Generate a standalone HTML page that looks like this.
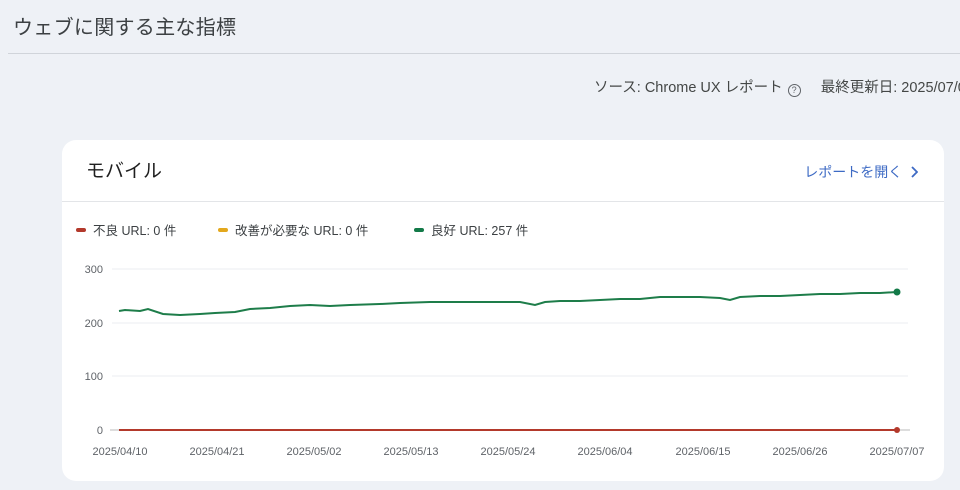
<!DOCTYPE html>
<html><head><meta charset="utf-8">
<style>
*{margin:0;padding:0;box-sizing:border-box}
body{width:960px;height:490px;background:#eef1f6;font-family:"Liberation Sans","Noto Sans CJK JP",sans-serif;position:relative;overflow:hidden;color:#1f1f1f}
.title{position:absolute;left:13px;top:11px;font-size:20px;color:#3c4043;letter-spacing:0.3px}
.hr{position:absolute;left:8px;right:0;top:53px;height:1px;background:#d0d4da}
.src{position:absolute;left:594px;top:76px;font-size:14.5px;color:#444746;white-space:nowrap}
.q{display:inline-block;width:13px;height:13px;border:1.3px solid #5f6368;border-radius:50%;font-size:9px;line-height:11px;text-align:center;vertical-align:-1px;margin-left:5px;color:#5f6368}
.card{position:absolute;left:62px;top:140px;width:882px;height:341px;background:#fff;border-radius:14px}
.ch{position:absolute;left:24px;top:16px;font-size:19px;color:#1f1f1f}
.open{position:absolute;right:26px;top:22px;font-size:14px;color:#3d6ac4}
.sep{position:absolute;left:0;right:0;top:61px;height:1px;background:#e3e5e8}
.leg{position:absolute;top:80px;font-size:12.5px;color:#3c4043;white-space:nowrap}
.leg i{display:inline-block;width:10px;height:4px;border-radius:2px;margin-right:7px;vertical-align:3px}
</style></head><body>
<div class="title">ウェブに関する主な指標</div>
<div class="hr"></div>
<div class="src">ソース: Chrome UX レポート<span class="q">?</span>&nbsp;&nbsp;&nbsp;&nbsp;&nbsp;最終更新日: 2025/07/07</div>
<div class="card">
<div class="ch">モバイル</div>
<div class="open">レポートを開く&nbsp;&nbsp;<svg width="8" height="12" viewBox="0 0 8 12" style="vertical-align:-1px"><path d="M2 1l5 5-5 5" fill="none" stroke="#3d6ac4" stroke-width="1.8"/></svg></div>
<div class="sep"></div>
<div class="leg" style="left:14px"><i style="background:#b3392b"></i>不良 URL: 0 件</div>
<div class="leg" style="left:156px"><i style="background:#e3a81d"></i>改善が必要な URL: 0 件</div>
<div class="leg" style="left:352px"><i style="background:#137a48"></i>良好 URL: 257 件</div>
</div>
<svg width="960" height="490" style="position:absolute;left:0;top:0" font-family="Liberation Sans, sans-serif" font-size="11" fill="#5f6368">
<g stroke="#ebedf0" stroke-width="1">
<line x1="112" y1="269" x2="908" y2="269"/><line x1="112" y1="323" x2="908" y2="323"/><line x1="112" y1="376" x2="908" y2="376"/>
</g>
<line x1="110" y1="430" x2="910" y2="430" stroke="#bbb" stroke-width="1"/>
<g text-anchor="end"><text x="103" y="273">300</text><text x="103" y="327">200</text><text x="103" y="380">100</text><text x="103" y="434">0</text></g>
<g text-anchor="middle"><text x="120" y="455">2025/04/10</text><text x="217" y="455">2025/04/21</text><text x="314" y="455">2025/05/02</text><text x="411" y="455">2025/05/13</text><text x="508" y="455">2025/05/24</text><text x="605" y="455">2025/06/04</text><text x="703" y="455">2025/06/15</text><text x="800" y="455">2025/06/26</text><text x="897" y="455">2025/07/07</text></g>
<line x1="119" y1="430" x2="897" y2="430" stroke="#b3392b" stroke-width="2"/>
<circle cx="897" cy="430" r="3" fill="#b3392b"/>
<polyline fill="none" stroke="#1e7d4a" stroke-width="2" points="119,311 125,310 140,311 148,309 163,314 180,315 200,314 215,313 235,312 250,309 270,308 290,306 310,305 330,306 350,305 380,304 400,303 430,302 470,302 500,302 520,302 535,305 545,302 560,301 580,301 600,300 620,299 640,299 660,297 680,297 700,297 720,298 730,300 740,297 760,296 780,296 800,295 820,294 840,294 860,293 880,293 897,292"/>
<circle cx="897" cy="292" r="3.5" fill="#137a48"/>
</svg>
</body></html>
